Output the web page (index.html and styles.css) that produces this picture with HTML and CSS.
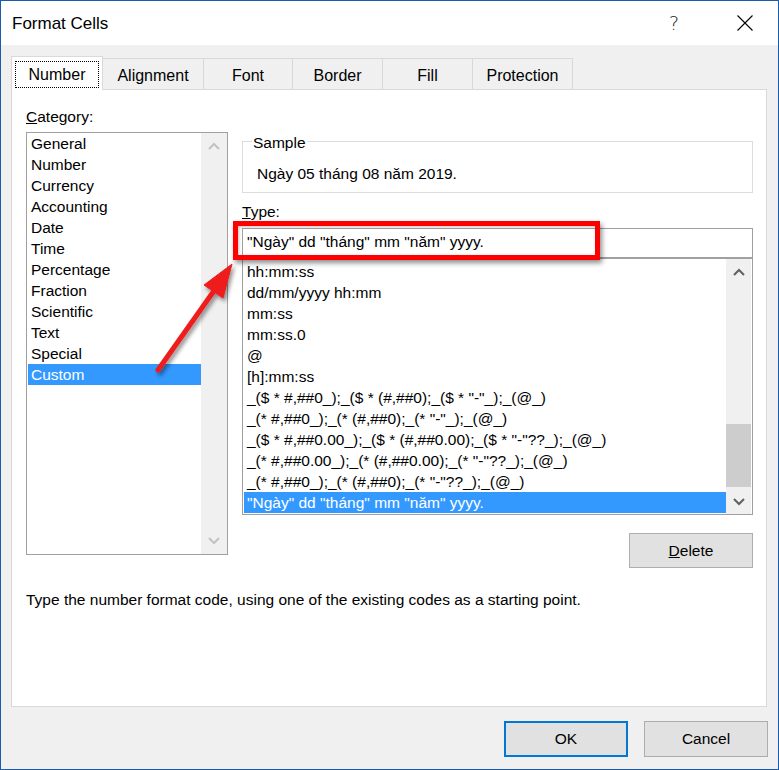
FILE: index.html
```html
<!DOCTYPE html>
<html lang="vi">
<head>
<meta charset="utf-8">
<title>Format Cells</title>
<link rel="stylesheet" href="styles.css">
</head>
<body>
<div class="window">
  <div class="titlebar">
    <span class="title">Format Cells</span>
    <span class="help">?</span>
    <span class="close">
      <svg width="16" height="16" viewBox="0 0 16 16"><path d="M0.5 0.5 L15.5 15.5 M15.5 0.5 L0.5 15.5" stroke="#000" stroke-width="1.1" fill="none"/></svg>
    </span>
  </div>

  <div class="tabs">
    <div class="tab active"><span class="focus">Number</span></div>
    <div class="tab w-align">Alignment</div>
    <div class="tab w-font">Font</div>
    <div class="tab w-border">Border</div>
    <div class="tab w-fill">Fill</div>
    <div class="tab w-prot">Protection</div>
  </div>

  <div class="panel">
    <div class="cols">
      <div class="leftcol">
        <div class="label"><u>C</u>ategory:</div>
        <div class="listbox cat">
          <ul class="items">
            <li>General</li>
            <li>Number</li>
            <li>Currency</li>
            <li>Accounting</li>
            <li>Date</li>
            <li>Time</li>
            <li>Percentage</li>
            <li>Fraction</li>
            <li>Scientific</li>
            <li>Text</li>
            <li>Special</li>
            <li class="sel">Custom</li>
          </ul>
          <div class="vscroll disabled">
            <span class="sbtn"><svg width="12" height="8" viewBox="0 0 12 8"><path d="M1 7 L6 2 L11 7" stroke="currentColor" stroke-width="2" fill="none"/></svg></span>
            <span class="track"></span>
            <span class="sbtn"><svg width="12" height="8" viewBox="0 0 12 8"><path d="M1 1 L6 6 L11 1" stroke="currentColor" stroke-width="2" fill="none"/></svg></span>
          </div>
        </div>
      </div>

      <div class="rightcol">
        <div class="group">
          <span class="legend">Sample</span>
          <div class="sample">Ngày 05 tháng 08 năm 2019.</div>
        </div>
        <div class="label type-label"><u>T</u>ype:</div>
        <div class="type-input">"Ngày" dd "tháng" mm "năm" yyyy.<span class="redbox"></span></div>
        <div class="listbox types">
          <ul class="items">
            <li>hh:mm:ss</li>
            <li>dd/mm/yyyy hh:mm</li>
            <li>mm:ss</li>
            <li>mm:ss.0</li>
            <li>@</li>
            <li>[h]:mm:ss</li>
            <li>_($ * #,##0_);_($ * (#,##0);_($ * "-"_);_(@_)</li>
            <li>_(* #,##0_);_(* (#,##0);_(* "-"_);_(@_)</li>
            <li>_($ * #,##0.00_);_($ * (#,##0.00);_($ * "-"??_);_(@_)</li>
            <li>_(* #,##0.00_);_(* (#,##0.00);_(* "-"??_);_(@_)</li>
            <li>_(* #,##0_);_(* (#,##0);_(* "-"??_);_(@_)</li>
            <li class="sel">"Ngày" dd "tháng" mm "năm" yyyy.</li>
          </ul>
          <div class="vscroll">
            <span class="sbtn"><svg width="12" height="8" viewBox="0 0 12 8"><path d="M1 7 L6 2 L11 7" stroke="currentColor" stroke-width="2" fill="none"/></svg></span>
            <span class="track"><span class="thumb"></span></span>
            <span class="sbtn"><svg width="12" height="8" viewBox="0 0 12 8"><path d="M1 1 L6 6 L11 1" stroke="currentColor" stroke-width="2" fill="none"/></svg></span>
          </div>
        </div>
        <div class="btnrow"><button class="btn"><u>D</u>elete</button></div>
      </div>
    </div>
    <p class="desc">Type the number format code, using one of the existing codes as a starting point.</p>
  </div>

  <div class="footer">
    <button class="btn ok">OK</button>
    <button class="btn">Cancel</button>
  </div>

  <svg class="arrow" width="779" height="770" viewBox="0 0 779 770">
    <defs>
      <filter id="sh" x="-20%" y="-20%" width="140%" height="140%">
        <feDropShadow dx="2" dy="3" stdDeviation="2" flood-color="#000" flood-opacity="0.45"/>
      </filter>
    </defs>
    <g filter="url(#sh)" fill="#ee1c1c" stroke="#ee1c1c">
      <line x1="158" y1="370" x2="216" y2="288" stroke-width="5" stroke-linecap="round"/>
      <polygon points="232,264 223,298 204,285" stroke-width="1" stroke-linejoin="round"/>
    </g>
  </svg>
</div>
</body>
</html>
```

FILE: styles.css
```css
* { box-sizing: border-box; }

html, body {
  margin: 0;
  padding: 0;
  background: #f0f0f0;
}

body {
  font-family: "Liberation Sans", Arial, sans-serif;
  font-size: 15.5px;
  color: #000;
}

.window {
  position: relative;
  width: 779px;
  height: 770px;
  border: 1px solid #1c5aab;
  background: #f0f0f0;
  overflow: hidden;
}

/* title bar */
.titlebar {
  height: 44px;
  background: #fff;
  display: flex;
  align-items: center;
  padding-left: 11px;
  padding-right: 10px;
}

.title {
  font-size: 17px;
  margin-top: 1px;
}

.help {
  margin-left: auto;
  width: 46px;
  margin-right: 25px;
  text-align: center;
  font-size: 19px;
  font-family: "DejaVu Sans", sans-serif;
  font-weight: 200;
  color: #222;
}

.close {
  width: 46px;
  display: flex;
  justify-content: center;
  align-items: center;
}

/* tabs */
.tabs {
  display: flex;
  align-items: flex-end;
  margin-top: 11px;
  padding-left: 10px;
  height: 33px;
  position: relative;
  z-index: 2;
}

.tab {
  height: 31px;
  border: 1px solid #d9d9d9;
  border-bottom: none;
  background: #f0f0f0;
  margin-left: -1px;
  display: flex;
  justify-content: center;
  align-items: center;
  padding-top: 3px;
  font-size: 16px;
}

.tab.active {
  width: 92px;
  height: 34px;
  margin-left: 0;
  margin-bottom: -1px;
  background: #fff;
  padding: 4px 3px 2px 3px;
  align-items: stretch;
}

.focus {
  flex: 1;
  border: 1px dotted #000;
  display: flex;
  justify-content: center;
  align-items: center;
  padding-top: 1px;
}

.w-align { width: 102px; }
.w-font { width: 90px; }
.w-border { width: 91px; }
.w-fill { width: 91px; }
.w-prot { width: 101px; }

/* panel */
.panel {
  margin-left: 10px;
  width: 756px;
  height: 618px;
  border: 1px solid #d9d9d9;
  background: #fff;
  padding: 18px 0 0 14px;
}

.cols {
  display: flex;
  gap: 14px;
  align-items: flex-start;
}

.leftcol {
  width: 202px;
}

.rightcol {
  width: 511px;
}

.label {
  line-height: 18px;
  height: 24px;
}

.listbox {
  border: 1px solid #a0a0a0;
  display: flex;
  background: #fff;
}

.listbox.cat {
  height: 423px;
}

.items {
  list-style: none;
  margin: 0;
  padding: 0 0 0 1px;
  flex: 1;
  white-space: nowrap;
  overflow: hidden;
}

.items li {
  height: 21px;
  line-height: 21px;
  padding-left: 3px;
}

.items li.sel {
  background: #3399ff;
  color: #fff;
}

.vscroll {
  width: 26px;
  background: #f0f0f0;
  display: flex;
  flex-direction: column;
  color: #606060;
}

.vscroll.disabled {
  color: #c2c2c2;
}

.sbtn {
  height: 26px;
  display: flex;
  justify-content: center;
  align-items: center;
}

.track {
  flex: 1;
  position: relative;
}

/* right column */
.group {
  margin-top: 33px;
  height: 52px;
  border: 1px solid #dcdcdc;
  padding-left: 9px;
}

.legend {
  display: inline-block;
  background: #fff;
  line-height: 18px;
  margin-top: -8px;
  padding: 0 1px;
  vertical-align: top;
}

.sample {
  line-height: 18px;
  margin-top: 5px;
  padding-left: 5px;
}

.type-label {
  margin-top: 10px;
  height: 25px;
}

.type-input {
  position: relative;
  height: 30px;
  border: 1px solid #a0a0a0;
  line-height: 25px;
  padding-left: 4px;
  white-space: nowrap;
}

.redbox {
  position: absolute;
  left: -10px;
  top: -8px;
  width: 367px;
  height: 39px;
  border: 5px solid #ff0000;
  box-shadow: 2px 3px 5px rgba(0, 0, 0, 0.45), inset 1px 1px 3px rgba(0, 0, 0, 0.25);
}

.listbox.types {
  height: 257px;
}

.listbox.types .items {
  padding-top: 2px;
}

.listbox.types .vscroll {
  width: 25px;
  margin-right: 1px;
}

.listbox.types .sbtn {
  height: 25px;
}

.thumb {
  position: absolute;
  left: 0;
  right: 0;
  top: 140px;
  height: 63px;
  background: #cdcdcd;
}

.btnrow {
  display: flex;
  justify-content: flex-end;
  margin-top: 18px;
}

.btn {
  font-family: inherit;
  font-size: 15.5px;
  color: #000;
  width: 124px;
  height: 35px;
  background: #e1e1e1;
  border: 1px solid #adadad;
  padding: 0;
}

.desc {
  margin: 23px 0 0 0;
  line-height: 18px;
}

/* footer */
.footer {
  display: flex;
  justify-content: flex-end;
  gap: 16px;
  margin-top: 14px;
  padding-right: 10px;
}

.footer .btn {
  height: 36px;
}

.btn.ok {
  border: 2px solid #0078d7;
}

.arrow {
  position: absolute;
  left: -1px;
  top: -1px;
  pointer-events: none;
}
```
